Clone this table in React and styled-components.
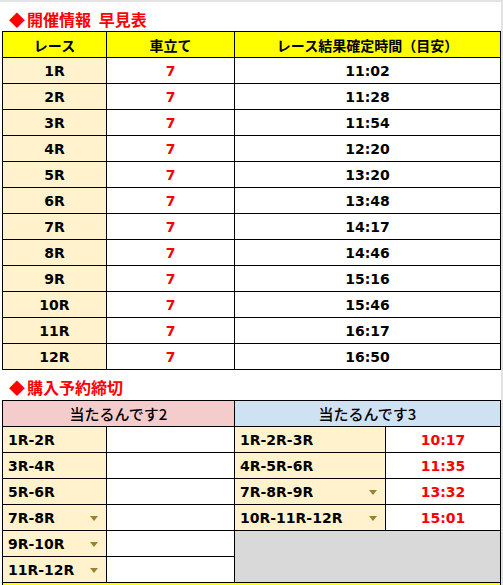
import React from "react";
import styled, { createGlobalStyle } from "styled-components";

const Global = createGlobalStyle`
  html, body { margin: 0; padding: 0; background: #fff; }
  body { font-family: "DejaVu Sans", "Noto Sans CJK JP", sans-serif; color: #000; }
`;

const Page = styled.div`
  width: 503px;
  box-sizing: border-box;
  border-top: 2px solid #e3e3e3;
  border-right: 2px solid #e3e3e3;
  padding-left: 2px;
`;

const Title = styled.div`
  height: ${(p) => p.$h}px;
  box-sizing: border-box;
  padding: 4px 0 0 7px;
  display: flex;
  align-items: center;
  font-family: "Noto Sans CJK JP", sans-serif;
  font-weight: 700;
  font-size: 16px;
  line-height: 20px;
  color: #ff0000;
  white-space: pre;
  word-spacing: 4px;
`;

const Diamond = styled.span`
  font-size: 16px;
  margin-right: 2px;
`;

const Grid = styled.div`
  display: grid;
  grid-template-columns: ${(p) => p.$cols};
  grid-auto-rows: 25px;
  gap: 1px;
  background: #000;
  border: 1px solid #000;
`;

const Head = styled.div`
  background: ${(p) => p.$bg || "#ffff00"};
  grid-column: ${(p) => (p.$span ? `span ${p.$span}` : "auto")};
  display: flex;
  align-items: center;
  justify-content: center;
  font-family: "Noto Sans CJK JP", sans-serif;
  font-weight: ${(p) => (p.$light ? 500 : 700)};
  font-size: ${(p) => (p.$light ? 15 : 14)}px;
  white-space: nowrap;
`;

const Cell = styled.div`
  background: ${(p) => p.$bg || "#fff"};
  display: flex;
  align-items: center;
  justify-content: ${(p) => (p.$left ? "space-between" : "center")};
  padding: ${(p) => (p.$left ? "0 8px 0 5px" : "0")};
  font-weight: 700;
  font-size: 14px;
  color: ${(p) => (p.$red ? "#ff0000" : "#000")};
  white-space: nowrap;
`;

const Blank = styled.div`
  background: #d9d9d9;
  grid-column: 3 / 5;
  grid-row: 6 / 8;
`;

const Arrow = styled.span`
  width: 0;
  height: 0;
  border-left: 4px solid transparent;
  border-right: 4px solid transparent;
  border-top: 5px solid #9c7f2f;
  margin-top: 2px;
`;

const Footer = styled.div`
  height: 20px;
  background: #ffff00;
  border-left: 1px solid #000;
  border-right: 1px solid #000;
`;

const races = [
  ["1R", "11:02"],
  ["2R", "11:28"],
  ["3R", "11:54"],
  ["4R", "12:20"],
  ["5R", "13:20"],
  ["6R", "13:48"],
  ["7R", "14:17"],
  ["8R", "14:46"],
  ["9R", "15:16"],
  ["10R", "15:46"],
  ["11R", "16:17"],
  ["12R", "16:50"],
];

const two = [
  ["1R-2R", false],
  ["3R-4R", false],
  ["5R-6R", false],
  ["7R-8R", true],
  ["9R-10R", true],
  ["11R-12R", true],
];

const three = [
  ["1R-2R-3R", false, "10:17"],
  ["4R-5R-6R", false, "11:35"],
  ["7R-8R-9R", true, "13:32"],
  ["10R-11R-12R", true, "15:01"],
];

export default function App() {
  return (
    <Page>
      <Global />
      <Title $h={29}>
        <Diamond>◆</Diamond>開催情報 早見表
      </Title>
      <Grid $cols="103px 127px 265px">
        <Head>レース</Head>
        <Head>車立て</Head>
        <Head>レース結果確定時間（目安）</Head>
        {races.map(([r, t]) => (
          <React.Fragment key={r}>
            <Cell $bg="#fff2cc">{r}</Cell>
            <Cell $red>7</Cell>
            <Cell>{t}</Cell>
          </React.Fragment>
        ))}
      </Grid>
      <Title $h={30}>
        <Diamond>◆</Diamond>購入予約締切
      </Title>
      <Grid $cols="103px 127px 150px 114px">
        <Head $bg="#f4cccc" $span={2} $light>当たるんです2</Head>
        <Head $bg="#cfe2f3" $span={2} $light>当たるんです3</Head>
        {two.map(([l, a], i) => (
          <React.Fragment key={l}>
            <Cell $bg="#fff2cc" $left>
              <span>{l}</span>
              {a && <Arrow />}
            </Cell>
            <Cell />
            {three[i] && (
              <>
                <Cell $bg="#fff2cc" $left>
                  <span>{three[i][0]}</span>
                  {three[i][1] && <Arrow />}
                </Cell>
                <Cell $red>{three[i][2]}</Cell>
              </>
            )}
            {i === 4 && <Blank />}
          </React.Fragment>
        ))}
      </Grid>
      <Footer />
    </Page>
  );
}
